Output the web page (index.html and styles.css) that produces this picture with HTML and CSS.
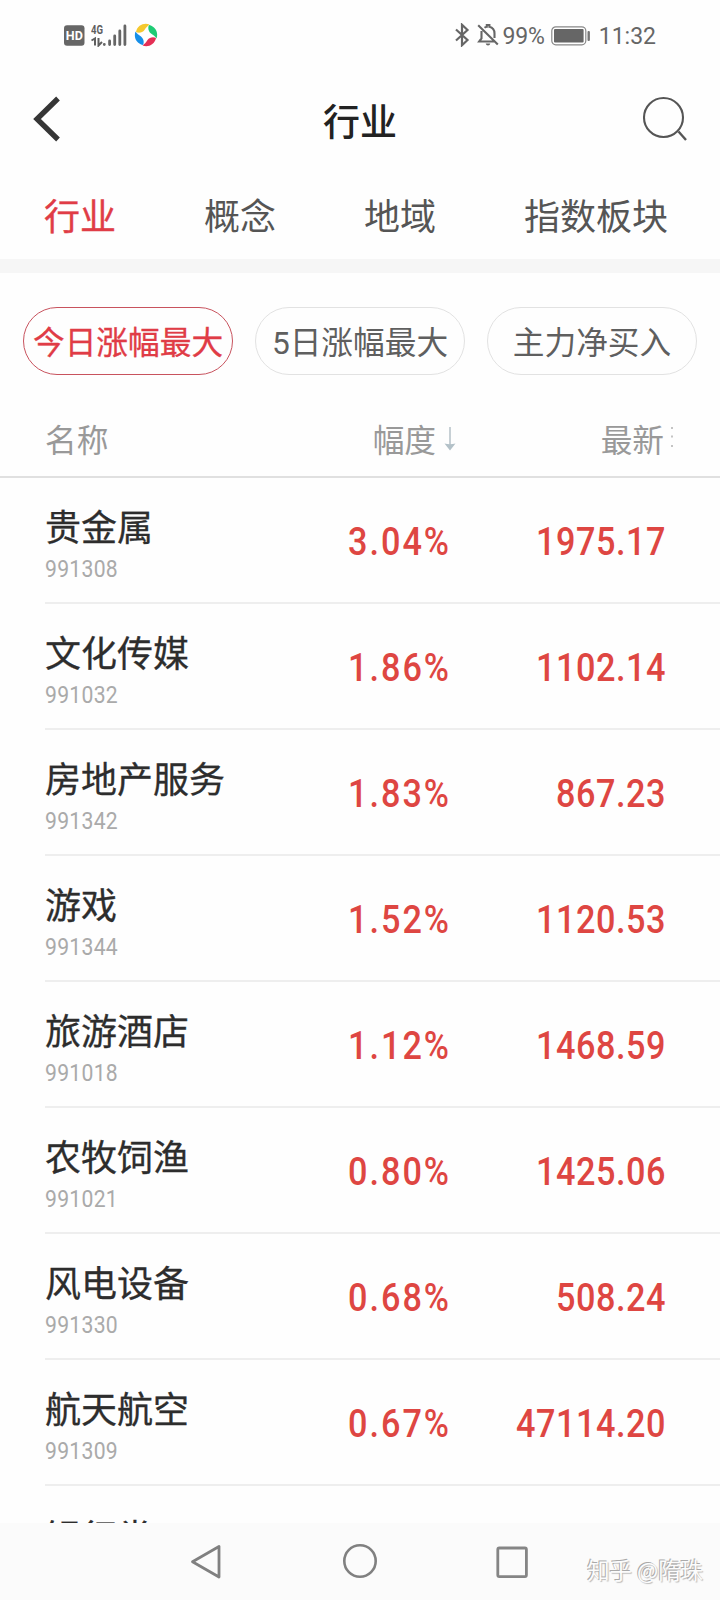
FILE: index.html
```html
<!DOCTYPE html>
<html lang="zh-CN">
<head>
<meta charset="utf-8">
<title>行业</title>
<link rel="stylesheet" href="styles.css">
</head>
<body>
<div class="screen">
  <div class="status">
    <svg class="hd" width="21" height="21" viewBox="0 0 21 21"><rect width="20.5" height="20.5" y=".3" rx="3" fill="#666"/><text x="10.3" y="15.4" text-anchor="middle" class="hd-text" textLength="17" lengthAdjust="spacingAndGlyphs">HD</text></svg>
    <svg class="signal" width="37" height="24" viewBox="0 0 37 24">
      <text x="0" y="10.6" class="net-text" textLength="12" lengthAdjust="spacingAndGlyphs">4G</text>
      <g fill="none" stroke="#5f5f5f" stroke-width="2"><path d="M.5 17.500L4 15.500V22.500M7.500 15V22.500L11 19"/></g>
      <g fill="none" stroke="#666" stroke-width="2.800" stroke-linecap="round"><path d="M13.300 21.300V21.600M18.600 18V21.600M23.700 13V21.600M28.800 8V21.600M33.900 3V21.600"/></g>
    </svg>
    <svg class="swirl" width="24" height="24" viewBox="0 0 24 24">
      <path d="M2 9C3.500 2 10 -.5 15.500 1.500C13.500 3 12 4.500 10.500 7C8.500 9.500 5 10.500 2 9Z" fill="#f5c82e"/>
      <path d="M15 2C22 3.500 24.500 10 22.500 15.500C21 13.500 19.500 12 17 10.500C14.500 8.500 13.500 5 15 2Z" fill="#1ecb74"/>
      <path d="M22 15C20.500 22 14 24.500 8.500 22.500C10.500 21 12 19.500 13.500 17C15.500 14.500 19 13.500 22 15Z" fill="#e42f55"/>
      <path d="M9 22C2 20.500 -.5 14 1.500 8.500C3 10.500 4.500 12 7 13.500C9.500 15.500 10.500 19 9 22Z" fill="#168fe8"/>
    </svg>
    <div class="status-right">
      <svg width="16" height="24" viewBox="0 0 16 24"><path d="M2 6.500L13.500 17L8 22.200V1.800L13.500 7L2 17.500" fill="none" stroke="#666" stroke-width="2.200"/></svg>
      <svg class="bell" width="22" height="24" viewBox="0 0 22 24"><g fill="none" stroke="#666" stroke-width="2.100"><path d="M1.200 2.200L20.800 21.500M4.500 8V15.500L2.200 18.500H17M7.500 4.800Q8.500 4 9.800 3.800V2H12.400V3.800Q17.500 5 17.500 10.500V15"/></g><path d="M8.700 20.500H13.300Q13 22.500 11 22.500T8.700 20.500Z" fill="#666"/></svg>
      <span class="pct">99%</span>
      <svg class="battery" width="40" height="20" viewBox="0 0 40 20"><rect x=".8" y=".8" width="34" height="18" rx="4" fill="#fff" stroke="#888" stroke-width="1.200"/><rect x="3" y="3" width="29.600" height="13.600" rx="1" fill="#666"/><rect x="36.500" y="5" width="2.400" height="10" rx="1" fill="#777"/></svg>
      <span class="time">11:32</span>
    </div>
  </div>

  <div class="titlebar">
    <svg class="back" width="30" height="48" viewBox="0 0 30 48"><path d="M26 3.500L5 24L26 44.500" fill="none" stroke="#363636" stroke-width="5.300"/></svg>
    <h1 class="title">行业</h1>
    <svg class="search" width="46" height="46" viewBox="0 0 46 46"><circle cx="21.500" cy="21.500" r="19.500" fill="none" stroke="#555" stroke-width="2.100"/><path d="M36.500 35.500L44 44" stroke="#555" stroke-width="2.400"/></svg>
  </div>

  <div class="tabs"><span class="tab active">行业</span><span class="tab">概念</span><span class="tab">地域</span><span class="tab">指数板块</span></div>

  <div class="chips"><span class="chip selected">今日涨幅最大</span><span class="chip">5日涨幅最大</span><span class="chip">主力净买入</span></div>

  <div class="thead">
    <span class="c-name">名称</span>
    <span class="c-pct">幅度<svg class="arrow" width="12" height="24" viewBox="0 0 12 24"><path d="M6 0V20" stroke="#a9b7bf" stroke-width="1.300"/><path d="M.5 16.500Q6 18 11.500 16.500L6 23.500Z" fill="#b3c1c8"/></svg></span>
    <span class="c-last">最新<svg class="dots" width="4" height="24" viewBox="0 0 4 24"><g fill="#c4c4c4"><rect y="2" x="1" width="2" height="2"/><rect y="10.500" x="1" width="2" height="2"/><rect y="20" x="1" width="2" height="2"/></g></svg></span>
  </div>

  <div class="list">
    <div class="row"><div class="info"><b>贵金属</b><i>991308</i></div><span class="rate">3.04%</span><span class="value">1975.17</span></div>
    <div class="row"><div class="info"><b>文化传媒</b><i>991032</i></div><span class="rate">1.86%</span><span class="value">1102.14</span></div>
    <div class="row"><div class="info"><b>房地产服务</b><i>991342</i></div><span class="rate">1.83%</span><span class="value">867.23</span></div>
    <div class="row"><div class="info"><b>游戏</b><i>991344</i></div><span class="rate">1.52%</span><span class="value">1120.53</span></div>
    <div class="row"><div class="info"><b>旅游酒店</b><i>991018</i></div><span class="rate">1.12%</span><span class="value">1468.59</span></div>
    <div class="row"><div class="info"><b>农牧饲渔</b><i>991021</i></div><span class="rate">0.80%</span><span class="value">1425.06</span></div>
    <div class="row"><div class="info"><b>风电设备</b><i>991330</i></div><span class="rate">0.68%</span><span class="value">508.24</span></div>
    <div class="row"><div class="info"><b>航天航空</b><i>991309</i></div><span class="rate">0.67%</span><span class="value">47114.20</span></div>
    <div class="row"><div class="info"><b>银行类</b></div></div>
  </div>

  <div class="navbar">
    <svg width="34" height="38" viewBox="0 0 34 38"><path d="M30 3.500V34L3.500 18.700Z" fill="none" stroke="#808080" stroke-width="2.800" stroke-linejoin="round"/></svg>
    <svg width="36" height="36" viewBox="0 0 36 36"><circle cx="19" cy="17" r="15.700" fill="none" stroke="#808080" stroke-width="2.600"/></svg>
    <svg width="34" height="34" viewBox="0 0 34 34"><rect x="2.800" y="3" width="28.600" height="28.600" rx="1.500" fill="none" stroke="#858585" stroke-width="2.800"/></svg>
    <span class="watermark">知乎 @隋珠</span>
  </div>
</div>
</body>
</html>
```
FILE: styles.css
```css
* { box-sizing: border-box; }
body { margin: 0; background: #fdfdfd; }
svg { display: block; flex: none; }
.screen {
  width: 720px; height: 1600px; overflow: hidden;
  display: flex; flex-direction: column;
  background: #fefefe; color: #333;
  font-family: Roboto, "Noto Sans CJK SC", sans-serif;
}

.status { height: 80px; flex: none; display: flex; align-items: flex-start; padding: 23px 64px 0 64px; }
.hd { margin-top: 2px; }
.hd-text { font: 700 13.500px Roboto, sans-serif; fill: #fff; }
.signal { margin-left: 6px; }
.net-text { font: 700 13px Roboto, sans-serif; fill: #5f5f5f; }
.swirl { margin-left: 6px; }
.status-right { margin-left: auto; display: flex; height: 24px; align-items: flex-start; font-size: 23px; line-height: 28px; color: #666; }
.bell { margin-left: 7px; }
.pct { margin-left: 4px; letter-spacing: -.2px; }
.battery { margin: 3px 8px 0 6px; }
.time { letter-spacing: 0; }

.titlebar { height: 94px; flex: none; display: flex; align-items: flex-start; padding: 15px 32px 0 32px; }
.title { flex: 1; margin: 7px 0 0 16px; text-align: center; font-size: 37px; font-weight: 500; line-height: 44px; color: #222; }
.search { margin-top: 1px; }

.tabs { height: 85px; flex: none; display: flex; justify-content: space-between; padding: 22px 52px 0 44px; font-size: 36px; line-height: 44px; color: #555; }
.tab.active { color: #e03c46; -webkit-text-stroke: .4px #e03c46; }

.chips { flex: none; height: 130px; border-top: 14px solid #f6f6f6; padding: 34px 23px 0; display: flex; gap: 22px; }
.chip { width: 210px; height: 68px; padding-top: 3px; border: 1px solid #e2e2e2; border-radius: 34px; font-size: 31.700px; line-height: 66px; text-align: center; white-space: nowrap; color: #5f5f5f; }
.chip.selected { border-color: #c8535e; color: #e03c46; -webkit-text-stroke: .3px #e03c46; }

.thead { flex: none; height: 89px; border-bottom: 2px solid #e0e0e0; display: flex; padding: 30px 46px 0 45px; font-size: 31.700px; line-height: 46px; color: #999; }
.c-name { width: 200px; }
.c-pct { width: 211px; display: flex; justify-content: flex-end; }
.c-last { flex: 1; display: flex; justify-content: flex-end; }
.arrow { margin: 8px 0 0 8px; }
.dots { margin: 6px 0 0 6px; }

/* numerals are narrowed horizontally to give a condensed look */
.list { flex: 1; min-height: 0; overflow: hidden; padding-left: 45px; }
.row { height: 126px; border-bottom: 2px solid #eee; display: flex; padding-right: 54px; color: #de4642; font-size: 38px; font-weight: 500; line-height: 46px; }
.row:last-child .info { padding-top: 32px; }
.info { width: 210px; padding-top: 30px; }
.info b { display: block; height: 44px; font-size: 36px; line-height: 42px; font-weight: 400; color: #2d2d2d; -webkit-text-stroke: .3px #2d2d2d; }
.info i { display: block; font-size: 23.500px; line-height: 34px; font-style: normal; font-weight: 400; color: #aaa; letter-spacing: .3px; transform: scaleX(.9); transform-origin: left; }
.rate { width: 196px; padding-top: 41px; text-align: right; letter-spacing: 2.200px; transform: scaleX(.9); transform-origin: right; }
.value { flex: 1; padding-top: 41px; text-align: right; letter-spacing: .6px; transform: scaleX(.9); transform-origin: right; }

.navbar { position: relative; flex: none; height: 77px; background: #fbfbfb; display: flex; align-items: center; gap: 118px; padding-left: 189px; }
.watermark { position: absolute; right: 17px; top: 28px; font: 22.400px/36px "Noto Sans CJK SC", sans-serif; color: #fcfcfc; text-shadow: -1px -1px 0 #aaa, 1px 1px 1px #bbb; white-space: nowrap; }
```
